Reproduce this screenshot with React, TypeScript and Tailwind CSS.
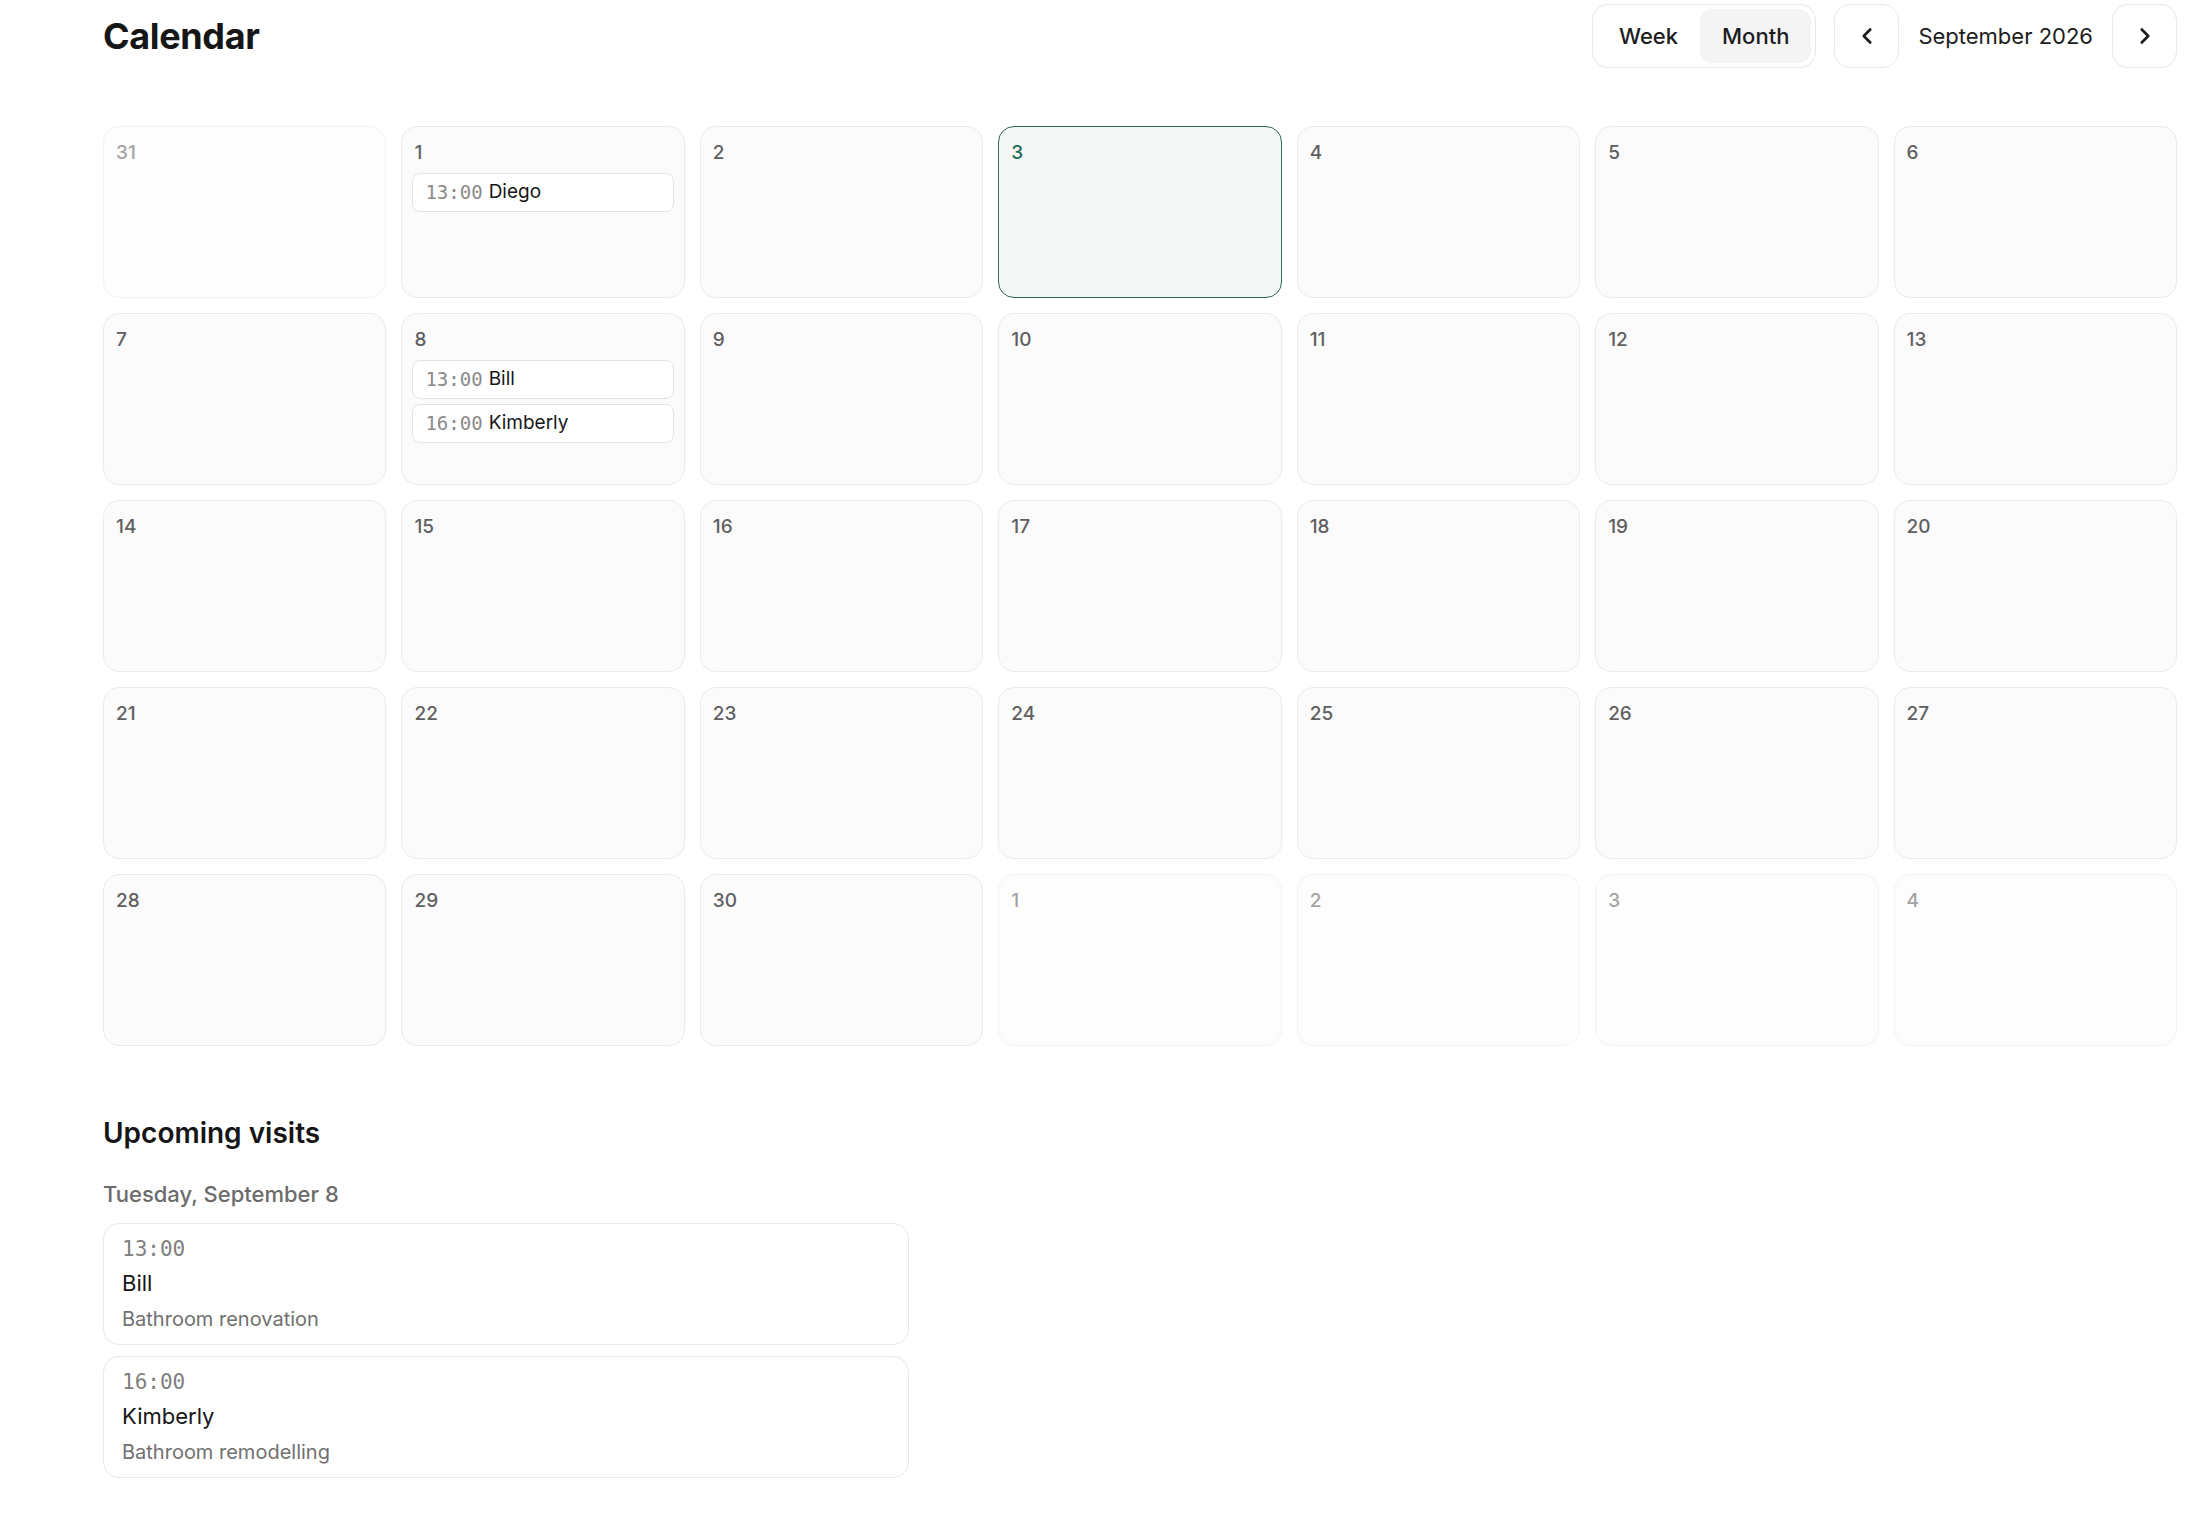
import React from 'react'
import { ChevronLeft, ChevronRight } from 'lucide-react'

// ── Data ───────────────────────────────────────────────────────────────────────

type Visit = { time: string; name: string; job?: string }

type Day = { n: number; outside?: boolean; today?: boolean; visits?: Visit[] }

const days: Day[] = [
  { n: 31, outside: true },
  { n: 1, visits: [{ time: '13:00', name: 'Diego' }] },
  { n: 2 },
  { n: 3, today: true },
  { n: 4 },
  { n: 5 },
  { n: 6 },
  { n: 7 },
  { n: 8, visits: [{ time: '13:00', name: 'Bill' }, { time: '16:00', name: 'Kimberly' }] },
  ...Array.from({ length: 22 }, (_, i) => ({ n: i + 9 })),
  { n: 1, outside: true },
  { n: 2, outside: true },
  { n: 3, outside: true },
  { n: 4, outside: true },
]

const upcoming: Visit[] = [
  { time: '13:00', name: 'Bill', job: 'Bathroom renovation' },
  { time: '16:00', name: 'Kimberly', job: 'Bathroom remodelling' },
]

const sans = "font-['Inter','Noto_Sans',sans-serif]"
const mono = "font-['DejaVu_Sans_Mono','Liberation_Mono',monospace]"

// ── Pieces ─────────────────────────────────────────────────────────────────────

function DayCell({ day }: { day: Day }) {
  const box = day.today
    ? 'bg-[#f4f7f5] border-[#2f6b57]'
    : day.outside
      ? 'bg-[#fdfdfd] border-[#f3f3f3]'
      : 'bg-[#fbfbfb] border-[#ebebeb]'
  const num = day.today ? 'text-[#1f6b52]' : day.outside ? 'text-[#a3a3a3]' : 'text-[#5f5f5f]'

  return (
    <div className={`h-[172px] rounded-2xl border px-[10px] pt-3 flex flex-col ${box}`}>
      <span className={`pl-[2px] text-[19px] leading-[28px] font-medium ${num}`}>{day.n}</span>
      {day.visits && (
        <div className="mt-[6px] flex flex-col gap-[5px]">
          {day.visits.map(v => (
            <div key={v.name} className="h-[39px] rounded-lg border border-[#e3e3e3] bg-white px-3 flex items-center gap-[6px]">
              <span className={`${mono} text-[19px] text-[#8a8a8a]`}>{v.time}</span>
              <span className="text-[19px] text-[#161616]">{v.name}</span>
            </div>
          ))}
        </div>
      )}
    </div>
  )
}

// ── Component ──────────────────────────────────────────────────────────────────

export default function App() {
  return (
    <div className={`min-h-screen bg-white ${sans} pl-[103px] pr-[34px] pt-1 pb-10`}>
      {/* Header */}
      <div className="h-16 flex items-center justify-between">
        <h1 className="text-[36px] font-bold tracking-[-0.01em] text-[#161616]">Calendar</h1>
        <div className="flex items-center">
          <div className="h-16 rounded-2xl border border-[#e8e8e8] p-1 flex">
            <button className="h-full px-[22px] rounded-xl text-[22px] font-medium text-[#1c1c1c]">Week</button>
            <button className="h-full px-[22px] rounded-xl bg-[#f3f4f3] text-[22px] font-medium text-[#1c1c1c]">Month</button>
          </div>
          <button className="ml-[18px] w-[65px] h-16 rounded-2xl border border-[#e8e8e8] flex items-center justify-center text-[#1c1c1c]">
            <ChevronLeft size={26} strokeWidth={2.4} />
          </button>
          <span className="mx-[19px] text-[22px] text-[#1c1c1c]">September 2026</span>
          <button className="w-[65px] h-16 rounded-2xl border border-[#e8e8e8] flex items-center justify-center text-[#1c1c1c]">
            <ChevronRight size={26} strokeWidth={2.4} />
          </button>
        </div>
      </div>

      {/* Month grid */}
      <div className="mt-[58px] grid grid-cols-7 gap-[15px]">
        {days.map((d, i) => (
          <DayCell key={i} day={d} />
        ))}
      </div>

      {/* Upcoming visits */}
      <h2 className="mt-[69px] text-[28px] leading-[36px] font-semibold text-[#161616]">Upcoming visits</h2>
      <p className="mt-7 text-[22px] leading-[30px] font-medium text-[#6b6b6b]">Tuesday, September 8</p>
      <div className="mt-[14px] w-[806px] flex flex-col gap-[11px]">
        {upcoming.map(v => (
          <div key={v.name} className="rounded-2xl border border-[#e8e8e8] bg-white px-[18px] py-[11px] flex flex-col">
            <span className={`${mono} text-[21px] leading-[28px] text-[#808080]`}>{v.time}</span>
            <span className="mt-[5px] text-[22px] leading-[30px] text-[#161616]">{v.name}</span>
            <span className="mt-[7px] text-[20px] leading-[28px] text-[#707070]">{v.job}</span>
          </div>
        ))}
      </div>
    </div>
  )
}
